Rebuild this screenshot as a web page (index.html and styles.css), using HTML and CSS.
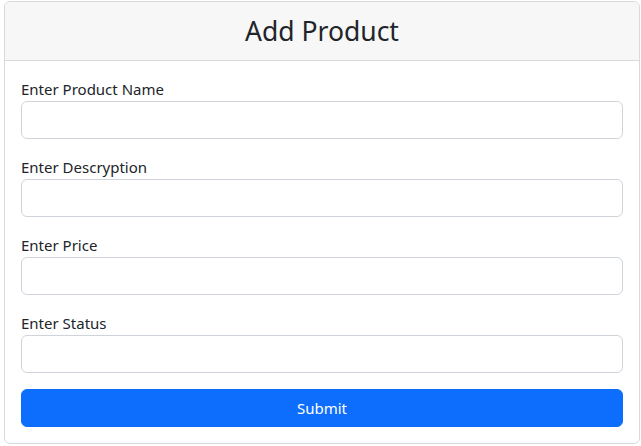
FILE: index.html
```html
<!DOCTYPE html>
<html>
<head>
<meta charset="utf-8">
<link rel="stylesheet" href="styles.css">
</head>
<body>
<div class="page">
  <div class="card">
    <div class="card-header">
      <h2 class="title">Add Product</h2>
    </div>
    <form class="card-body">
      <div class="field">
        <label class="label">Enter Product Name</label>
        <input class="input" type="text">
      </div>
      <div class="field">
        <label class="label">Enter Descryption</label>
        <input class="input" type="text">
      </div>
      <div class="field">
        <label class="label">Enter Price</label>
        <input class="input" type="text">
      </div>
      <div class="field">
        <label class="label">Enter Status</label>
        <input class="input" type="text">
      </div>
      <button class="btn" type="button">Submit</button>
    </form>
  </div>
</div>
</body>
</html>
```
FILE: styles.css
```css
* { box-sizing: border-box; }
html, body { margin: 0; padding: 0; background: #fff; }
body {
  font-family: "Noto Sans", "Open Sans", sans-serif;
  font-size: 15px;
  line-height: 24px;
  color: #212529;
}
.page { padding: 1px 1px 0 4px; }
.card {
  border: 1px solid #d9d9d9;
  border-radius: 6px;
  overflow: hidden;
}
.card-header {
  background: #f7f7f7;
  border-bottom: 1px solid #d9d9d9;
  height: 59px;
  display: flex;
  align-items: center;
  justify-content: center;
}
.title {
  margin: 0;
  font-weight: 400;
  font-size: 26.5px;
  line-height: 36px;
  color: #212529;
}
.card-body {
  padding: 16px;
  display: flex;
  flex-direction: column;
  gap: 16px;
}
.field { display: flex; flex-direction: column; }
.label { display: block; }
.input {
  height: 38px;
  border: 1px solid #ced4da;
  border-radius: 6px;
  font: inherit;
  padding: 6px 12px;
  background: #fff;
}
.btn {
  height: 38px;
  border: 1px solid #0d6efd;
  background: #0d6efd;
  color: #fff;
  border-radius: 6px;
  font: inherit;
  cursor: pointer;
}
```
